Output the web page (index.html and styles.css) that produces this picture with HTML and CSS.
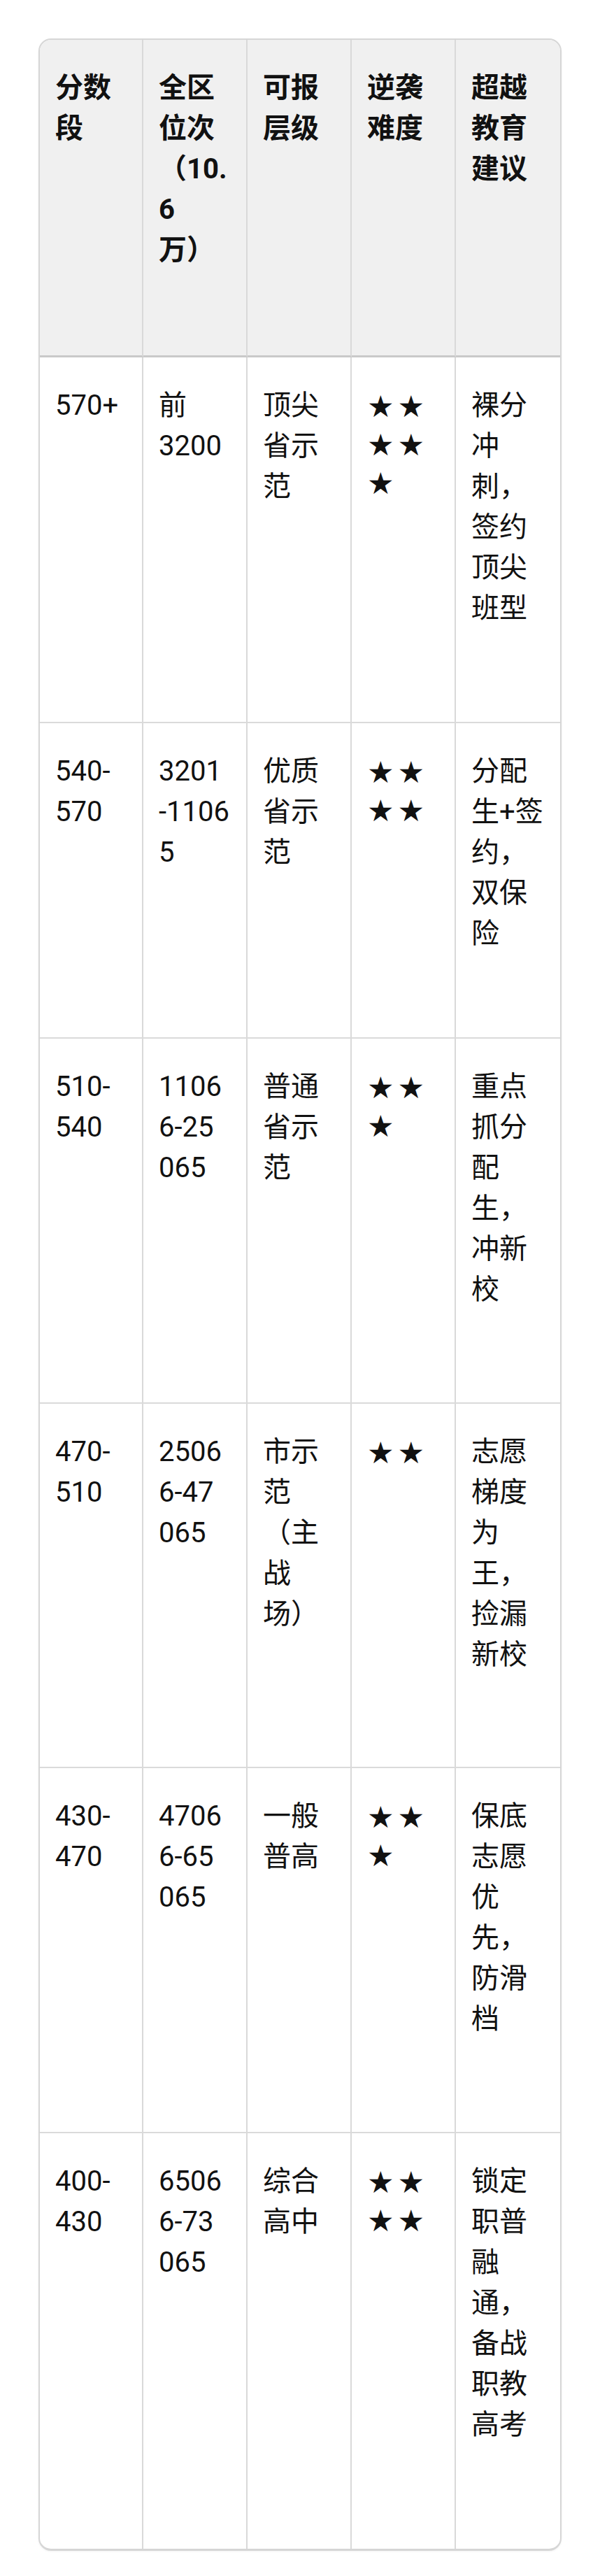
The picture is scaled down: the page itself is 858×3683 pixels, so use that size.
FILE: index.html
```html
<!DOCTYPE html>
<html lang="zh-CN">
<head>
<meta charset="utf-8">
<title>分数段与教育建议</title>
<link rel="stylesheet" href="styles.css">
</head>
<body>
<div class="card">
  <div class="grid">
    <div class="cell head">分数<br>段</div>
    <div class="cell head">全区<br>位次<br>（10.<br>6<br>万）</div>
    <div class="cell head">可报<br>层级</div>
    <div class="cell head">逆袭<br>难度</div>
    <div class="cell head last">超越<br>教育<br>建议</div>

    <div class="cell">570+</div>
    <div class="cell">前<br>3200</div>
    <div class="cell">顶尖<br>省示<br>范</div>
    <div class="cell stars">★★<br>★★<br>★</div>
    <div class="cell last">裸分<br>冲<br>刺，<br>签约<br>顶尖<br>班型</div>

    <div class="cell">540-<br>570</div>
    <div class="cell">3201<br>-1106<br>5</div>
    <div class="cell">优质<br>省示<br>范</div>
    <div class="cell stars">★★<br>★★</div>
    <div class="cell last">分配<br>生+签<br>约，<br>双保<br>险</div>

    <div class="cell">510-<br>540</div>
    <div class="cell">1106<br>6-25<br>065</div>
    <div class="cell">普通<br>省示<br>范</div>
    <div class="cell stars">★★<br>★</div>
    <div class="cell last">重点<br>抓分<br>配<br>生，<br>冲新<br>校</div>

    <div class="cell">470-<br>510</div>
    <div class="cell">2506<br>6-47<br>065</div>
    <div class="cell">市示<br>范<br>（主<br>战<br>场）</div>
    <div class="cell stars">★★</div>
    <div class="cell last">志愿<br>梯度<br>为<br>王，<br>捡漏<br>新校</div>

    <div class="cell">430-<br>470</div>
    <div class="cell">4706<br>6-65<br>065</div>
    <div class="cell">一般<br>普高</div>
    <div class="cell stars">★★<br>★</div>
    <div class="cell last">保底<br>志愿<br>优<br>先，<br>防滑<br>档</div>

    <div class="cell bottom">400-<br>430</div>
    <div class="cell bottom">6506<br>6-73<br>065</div>
    <div class="cell bottom">综合<br>高中</div>
    <div class="cell bottom stars">★★<br>★★</div>
    <div class="cell bottom last">锁定<br>职普<br>融<br>通，<br>备战<br>职教<br>高考</div>
  </div>
</div>
</body>
</html>
```

FILE: styles.css
```css
html, body {
  margin: 0;
  padding: 0;
  background: #ffffff;
}

body {
  font-family: Roboto, "Noto Sans CJK SC", sans-serif;
  color: #111111;
  height: 3683px;
}

.card {
  margin: 55px 0 0 55px;
  width: 748px;
  box-sizing: border-box;
  border: 2px solid #d6d6d6;
  border-bottom-width: 3px;
  border-radius: 18px;
  overflow: hidden;
  background: #ffffff;
  box-shadow: 0 1px 3px rgba(0, 0, 0, 0.06);
}

.grid {
  display: grid;
  grid-template-columns: 148px 149px 149px 149px 1fr;
  grid-template-rows: 454px 523px 451px 522px 521px 522px 594px;
}

.cell {
  box-sizing: border-box;
  padding: 40px 10px 0 22px;
  font-size: 40px;
  line-height: 58px;
  white-space: nowrap;
  border-right: 2px solid #d9d9d9;
  border-bottom: 2px solid #dadada;
}

.cell.last {
  border-right: none;
}

.cell.bottom {
  border-bottom: none;
}

.cell.head {
  background: #f0f0f0;
  font-weight: 700;
  border-bottom: 3px solid #c9c9c9;
}

.stars {
  font-family: "DejaVu Sans", sans-serif;
  font-size: 43px;
  line-height: 55px;
  letter-spacing: 5px;
  padding-top: 43px;
  padding-left: 22px;
}
```
